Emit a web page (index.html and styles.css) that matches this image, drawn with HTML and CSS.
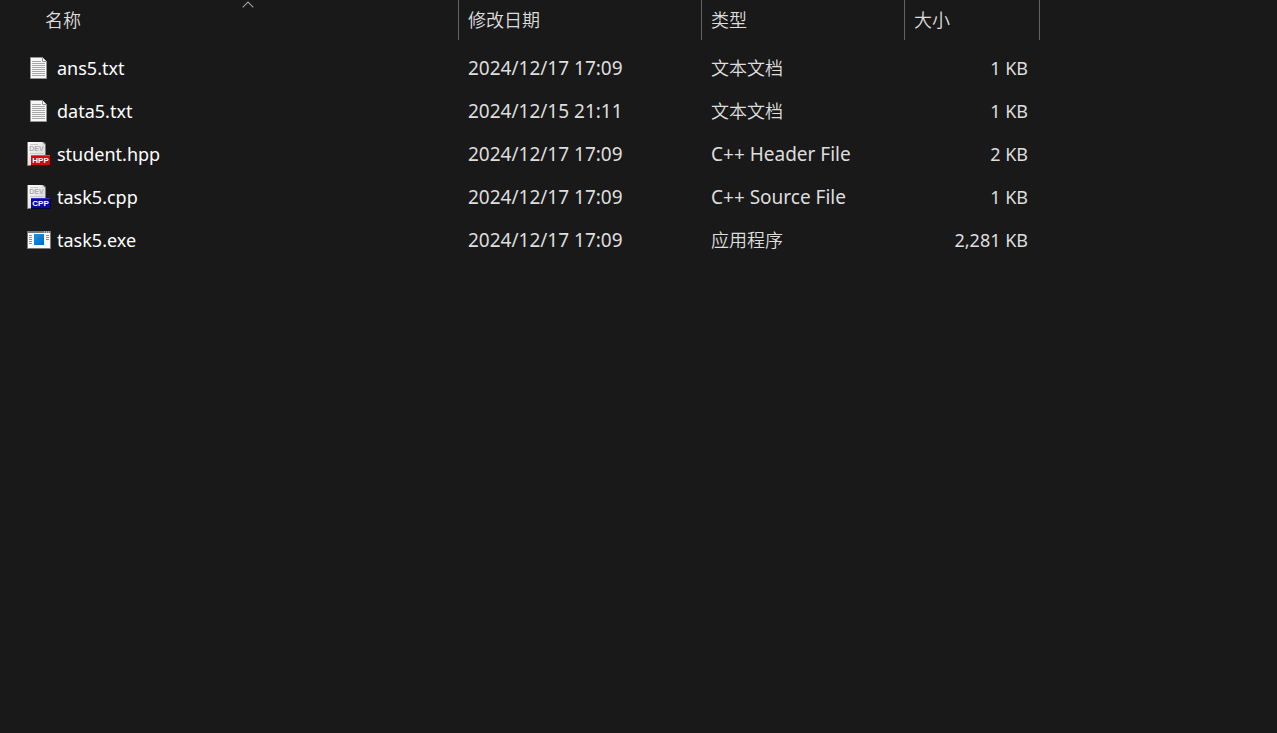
FILE: index.html
```html
<!DOCTYPE html>
<html lang="zh-CN">
<head>
<meta charset="utf-8">
<title>文件列表</title>
<link rel="stylesheet" href="styles.css">
</head>
<body>
<main class="explorer">
<table class="files">
<colgroup><col class="col-name"><col class="col-date"><col class="col-type"><col class="col-size"></colgroup>
<thead>
<tr>
<th class="head head-name" aria-sort="ascending"><button class="sort" type="button">名称</button><svg class="arrow" width="12" height="7" viewBox="0 0 12 7" aria-hidden="true"><path d="M.7 6.3 6 1l5.3 5.3" fill="none" stroke="#a0a0a0" stroke-width="1.1"/></svg></th>
<th class="head"><button class="sort" type="button">修改日期</button></th>
<th class="head"><button class="sort" type="button">类型</button></th>
<th class="head"><button class="sort" type="button">大小</button></th>
</tr>
</thead>
<tbody>
<tr>
<td class="cell name"><div class="file"><svg class="icon" viewBox="0 0 24 24" aria-hidden="true"><use href="#page"/></svg><span>ans5.txt</span></div></td>
<td class="cell">2024/12/17 17:09</td><td class="cell cjk">文本文档</td><td class="cell size">1 KB</td>
</tr>
<tr>
<td class="cell name"><div class="file"><svg class="icon" viewBox="0 0 24 24" aria-hidden="true"><use href="#page"/></svg><span>data5.txt</span></div></td>
<td class="cell">2024/12/15 21:11</td><td class="cell cjk">文本文档</td><td class="cell size">1 KB</td>
</tr>
<tr>
<td class="cell name"><div class="file"><svg class="icon" viewBox="0 0 24 24" aria-hidden="true"><use href="#dev"/><path d="M4 14h20v10H4z" fill="#3a0505"/><path d="M4 13h19v10H4z" fill="#d40b0b"/><path d="M4 13h19v1H4z" fill="#f04040"/><text class="tag" x="13.5" y="21">HPP</text></svg><span>student.hpp</span></div></td>
<td class="cell">2024/12/17 17:09</td><td class="cell">C++ Header File</td><td class="cell size">2 KB</td>
</tr>
<tr>
<td class="cell name"><div class="file"><svg class="icon" viewBox="0 0 24 24" aria-hidden="true"><use href="#dev"/><path d="M4 14h20v10H4z" fill="#05053a"/><path d="M4 13h19v10H4z" fill="#0a0a9e"/><path d="M4 13h19v1H4z" fill="#3030c0"/><text class="tag" x="13.5" y="21">CPP</text></svg><span>task5.cpp</span></div></td>
<td class="cell">2024/12/17 17:09</td><td class="cell">C++ Source File</td><td class="cell size">1 KB</td>
</tr>
<tr>
<td class="cell name"><div class="file"><svg class="icon" viewBox="0 0 24 24" aria-hidden="true"><path d="M0 3h24v18H0z" fill="#777"/><path d="M1 5h22v15H1z" fill="#fafafa"/><path d="M17 4h1m1 0h1m1 0h1" stroke="#eee"/><path d="M2 7.5h3M2 9.5h3M2 11.5h3M2 13.5h3M2 15.5h3M19 7.5h3M19 9.5h3M19 11.5h3" stroke="#8d8d8d"/><path d="M7 6h10v11H7z" fill="url(#blue)"/></svg><span>task5.exe</span></div></td>
<td class="cell">2024/12/17 17:09</td><td class="cell cjk">应用程序</td><td class="cell size">2,281 KB</td>
</tr>
</tbody>
</table>
</main>
<svg class="defs" aria-hidden="true">
<defs>
<linearGradient id="blue" x2="1" y2="1"><stop stop-color="#1b96e6"/><stop offset="1" stop-color="#0467bd"/></linearGradient>
<linearGradient id="paper" x2="1" y2="1"><stop stop-color="#fff"/><stop offset="1" stop-color="#cfcfcf"/></linearGradient>
<g id="page"><path d="M3.5 1.5h12l4 4v17h-16z" fill="#f8f8f8" stroke="#939393"/><path d="M15.5 1.5v4h4" fill="#fff" stroke="#939393"/><path d="M5 5.5h9M5 7.5h13M5 9.5h13M5 11.5h13M5 13.5h13M5 15.5h13M5 17.5h13M5 19.5h13" stroke="#a6a6a6"/></g>
<g id="dev"><path d="M0 0h17l2 2v22H0z" fill="#777"/><path d="M1 0h14l3 3v20H1z" fill="url(#paper)"/><path d="M15 0v3h3" fill="#ddd"/><path d="M3 2.5h8M3 11.5h13" stroke="#c8c8c8"/><text class="dev" x="9.5" y="9">DEV</text></g>
</defs>
</svg>
</body>
</html>
```
FILE: styles.css
```css
body {
  margin: 0;
  min-height: 100vh;
  background: #191919;
  color: #dedede;
  font-family: "Noto Sans", "Noto Sans CJK SC", sans-serif;
  font-size: 19px;
}

.files {
  width: 1040px;
  table-layout: fixed;
  border-collapse: separate;
  border-spacing: 0;
}

.col-name { width: 459px; }
.col-date { width: 243px; }
.col-type { width: 203px; }
.col-size { width: 135px; }

.head {
  position: relative;
  height: 40px;
  box-sizing: border-box;
  padding: 0 0 0 9px;
  border-right: 1px solid #636363;
  text-align: left;
  vertical-align: top;
  font-weight: 400;
}

.head-name { padding-left: 45px; }

.sort {
  display: block;
  width: 100%;
  padding: 0;
  border: 0;
  background: none;
  color: inherit;
  font: 350 18px/38px "Noto Sans CJK SC", sans-serif;
  text-align: left;
}

.arrow {
  position: absolute;
  top: 1px;
  left: 242px;
}

tbody::before {
  content: "";
  display: block;
  height: 7px;
}

.cell {
  height: 43px;
  box-sizing: border-box;
  padding: 0 0 2px 9px;
  line-height: 40px;
  white-space: nowrap;
}

.cjk {
  padding-bottom: 4px;
  font-family: "Noto Sans CJK SC", sans-serif;
  font-size: 18px;
  font-weight: 350;
  line-height: 38px;
}

.name {
  padding-left: 27px;
  color: #fff;
  font-size: 18px;
}

.file {
  display: flex;
  align-items: center;
  gap: 6px;
}

.icon {
  width: 24px;
  height: 24px;
}

.size {
  padding-right: 12px;
  font-size: 18px;
  text-align: right;
}

.tag,
.dev {
  font-family: "Liberation Sans", sans-serif;
  font-weight: 700;
  text-anchor: middle;
}

.tag {
  font-size: 8px;
  fill: #fff;
}

.dev {
  font-size: 7px;
  fill: #aaa;
}

.defs {
  display: block;
  width: 0;
  height: 0;
}
```
